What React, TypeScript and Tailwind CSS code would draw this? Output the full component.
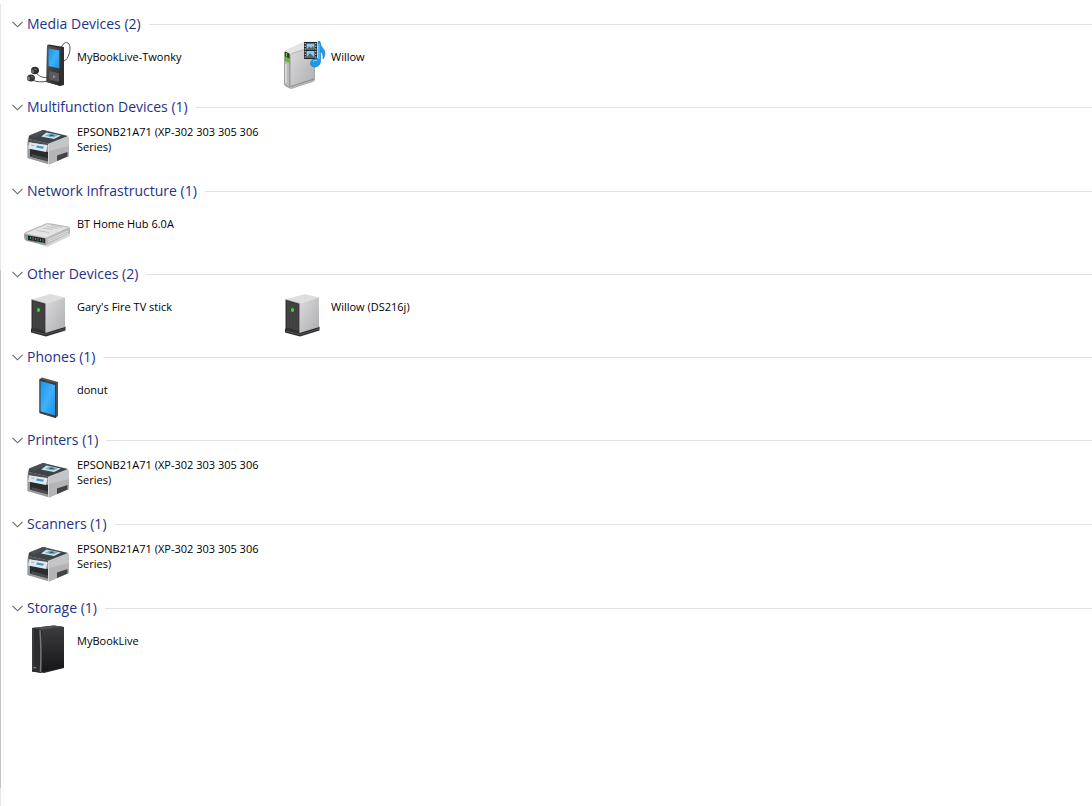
import { useState } from "react";
import type { ReactNode } from "react";
import clsx from "clsx";

type IconName = "player" | "mediaServer" | "printer" | "router" | "nas" | "phone" | "drive";

interface Device {
  name: string;
  icon: IconName;
}

interface DeviceGroup {
  title: string;
  devices: Device[];
  tall?: boolean;
}

const groups: DeviceGroup[] = [
  {
    title: "Media Devices",
    devices: [
      { name: "MyBookLive-Twonky", icon: "player" },
      { name: "Willow", icon: "mediaServer" },
    ],
  },
  {
    title: "Multifunction Devices",
    devices: [{ name: "EPSONB21A71 (XP-302 303 305 306 Series)", icon: "printer" }],
    tall: true,
  },
  {
    title: "Network Infrastructure",
    devices: [{ name: "BT Home Hub 6.0A", icon: "router" }],
  },
  {
    title: "Other Devices",
    devices: [
      { name: "Gary's Fire TV stick", icon: "nas" },
      { name: "Willow (DS216j)", icon: "nas" },
    ],
  },
  { title: "Phones", devices: [{ name: "donut", icon: "phone" }] },
  {
    title: "Printers",
    devices: [{ name: "EPSONB21A71 (XP-302 303 305 306 Series)", icon: "printer" }],
    tall: true,
  },
  {
    title: "Scanners",
    devices: [{ name: "EPSONB21A71 (XP-302 303 305 306 Series)", icon: "printer" }],
    tall: true,
  },
  { title: "Storage", devices: [{ name: "MyBookLive", icon: "drive" }] },
];

const Gradients = () => (
  <svg width="0" height="0" className="absolute" aria-hidden="true">
    <defs>
      <linearGradient id="blue" x1="0" y1="0" x2="1" y2="1">
        <stop offset="0" stopColor="#1a94e8" />
        <stop offset="0.5" stopColor="#3fb0fa" />
        <stop offset="1" stopColor="#1b93e6" />
      </linearGradient>
      <linearGradient id="silver" x1="0" y1="0" x2="1" y2="1">
        <stop offset="0" stopColor="#dcdcde" />
        <stop offset="1" stopColor="#adadb0" />
      </linearGradient>
      <linearGradient id="dark" x1="0" y1="0" x2="1" y2="1">
        <stop offset="0" stopColor="#5a5a5a" />
        <stop offset="1" stopColor="#262626" />
      </linearGradient>
      <linearGradient id="side" x1="0" y1="0" x2="0" y2="1">
        <stop offset="0" stopColor="#3c3c3e" />
        <stop offset="1" stopColor="#161618" />
      </linearGradient>
    </defs>
  </svg>
);

const icons: Record<IconName, ReactNode> = {
  player: (
    <>
      <path d="M37 8C39 2 44 1 45.500 5S45 19 40 21" fill="none" stroke="#555" strokeWidth="1" />
      <path d="M12 33C15 36 18 38 24 37.500M8 40C13 42 18 42.500 24 41" fill="none" stroke="#555" strokeWidth="1" />
      <path d="M23 5.500 25 4.500 40 7 40 45 36.500 46 22.500 42Z" fill="#303030" />
      <path d="M23 5.500 37 8.500 36.500 46 22.500 42Z" fill="url(#dark)" />
      <path d="M24.500 8.500 35.300 10.500V28.500L24.500 26Z" fill="url(#blue)" />
      <path d="M25.500 31.500 34.500 33.500V41.500L25.500 39Z" fill="#5b595f" stroke="#6b6b6b" strokeWidth=".5" />
      <path d="M29 34.500 32 37 29 38.500Z" fill="#8a8a8a" />
      <ellipse cx="11" cy="30.500" rx="4" ry="3.700" fill="#2e2e2e" />
      <ellipse cx="8.500" cy="31.500" rx="1.600" ry="2" fill="#6b6b6b" />
      <ellipse cx="7" cy="38" rx="4" ry="3.500" fill="#353535" />
      <ellipse cx="4.500" cy="38.500" rx="1.600" ry="2" fill="#7a7a7a" />
      <path d="M10 29l3 1M7 36.500l2.500 1" stroke="#8c8c8c" strokeWidth=".7" />
    </>
  ),
  mediaServer: (
    <>
      <path d="M7 11 24 3Q26 2 29 3L37 7V40L13 49 7 46Z" fill="#b0b0b0" />
      <path d="M6.500 12Q7 10.500 9 9.500L24 3Q26 2 29 3L36 6 13.500 14.500V48L6.500 45Z" fill="#e4e4e4" />
      <path d="M12.500 15.500Q13 14 15 13L36.500 6.500V39.500Q36.500 41 35 41.500L14.500 48Q12.500 48.500 12.500 47Z" fill="url(#silver)" stroke="#a2a2a4" strokeWidth=".7" />
      <path d="M6.500 12 11.500 14.500V47.500L6.500 45Z" fill="#b9b9bb" stroke="#8a8a8a" strokeWidth=".7" />
      <path d="M7 11.500 11.500 13.500V19L7 17Z" fill="#303830" />
      <path d="M7 16.500 11.500 18.500V23L7 21Z" fill="#63b62f" />
      <path d="M8.500 13v3.500" stroke="#7bd348" strokeWidth="1" />
      <path d="M8 24V43" stroke="#f4f4f4" strokeWidth="1" />
      <path d="M13 46.500 36 39" stroke="#8a8a8c" strokeWidth="1" />
      <path d="M26 2H39V19H26Z" fill="#222" />
      <path d="M28.500 3.500H36.500V9.500H28.500ZM28.500 11H36.500V17.500H28.500Z" fill="#91c8e8" />
      <path d="M28.500 9.500 31 6.500 33 8 35 6 36.500 9.500ZM28.500 17.500 32 13 36.500 17.500Z" fill="#496b78" />
      <path d="M27.200 3V19M37.800 3V19" stroke="#fff" strokeWidth="1" strokeDasharray="1.200 1.500" />
      <path d="M40 1.500H42Q42.500 6 45 8.500 49 13 45 19 45.500 13 42.500 11.500V21C42.500 26 38 28 34.500 26.500 30.500 24.500 32.500 18 40 18.500Z" fill="#199be9" stroke="#1477bd" strokeWidth=".6" />
      <path d="M41 4V19M35 21.500Q36.500 20 39 20.500" fill="none" stroke="#80d4ff" strokeWidth="1" />
    </>
  ),
  printer: (
    <>
      <path d="M3.500 17 5 12.500 19 7 43.500 13 45 16V33L25 41.500 3.500 35Z" fill="#c8c9cb" />
      <path d="M24 20 45 14V33L25 41.500Z" fill="#c5c5c7" />
      <path d="M25 28 45 23V33L25 41.500Z" fill="#b4b4b7" />
      <path d="M5 13 19 7 44 13 24.500 20.500 4.500 16Z" fill="#3e4447" />
      <path d="M5 12.500 19 7 25 8.500 10 14.500Z" fill="#4a5053" />
      <path d="M22.500 9.500 37 12.500 30 16 17 13.500Z" fill="#cce7ef" />
      <path d="M25.500 10.500 34 12.300 29.500 14.500 21 12.800Z" fill="#6cafc8" />
      <path d="M27 11.500 31 12.300 25 13.500" fill="#354c55" />
      <path d="M4.500 16 24.500 20.500V23L4 19Z" fill="#4c5053" />
      <path d="M3.500 19 24 23.500V41L3.500 35Z" fill="#98999c" />
      <path d="M6 25 24 29V38L6 33.500Z" fill="#292b2d" />
      <path d="M7.500 31 24 35.500V38.500L7.500 34Z" fill="#494b4d" />
      <path d="M5.500 19.500 23.500 22 22 29 4 25.500Z" fill="#dfe9ee" />
      <path d="M13 22.500 20 23.700 19 25.700 12 24.500Z" fill="#3d9aca" />
      <path d="M7 22 10.500 22.600" stroke="#aab4ba" strokeWidth="1" />
      <path d="M33 32.500 43.500 29V33.500L33 38Z" fill="#414345" />
      <path d="M24.500 21V41" stroke="#d6d6d8" strokeWidth="1" />
    </>
  ),
  router: (
    <>
      <path d="M1 31 23 40 46 29V25L20 34Z" fill="#d8d8d8" />
      <path d="M0 27Q0 25.500 3 24.500L22 16.500Q24 16 27 16.500L44 19.500Q46 20 46 22V26L23 37.500Q21 38.500 19 38L3 34Q0 33 0 31Z" fill="#aaa" />
      <path d="M1 26.500 23 17 45 20.500 22 31Z" fill="#e4e4e4" stroke="#c7c7c7" strokeWidth=".6" />
      <path d="M19 21 29 22.500M23 19.500 34 21.500M27 18.500 38 20.500M13 23.500 25 25.500" stroke="#c4c4c4" strokeWidth="1" />
      <path d="M22 31 45.500 21.500V26L22 37.500Z" fill="#bcbcbc" />
      <path d="M24 33 44 24M24 35 44 26" stroke="#eee" strokeWidth=".7" />
      <path d="M1 27.500 22 31.500V37.500L2 33.500Z" fill="#8f8f8f" />
      <path d="M4 28.500 21 31.500V36L4 33Z" fill="#242626" />
      <path d="M6 31h1M11 32h1M16 33h1" stroke="#49c888" strokeWidth="1.500" />
      <path d="M9 30v3.500M14 31v3.500M19 32v3.500" stroke="#899" strokeWidth=".6" />
    </>
  ),
  nas: (
    <>
      <path d="M7 38.500 22 42 41.500 36.500V40.500L22 46.500 7 42.500Z" fill="#2c2c2c" />
      <path d="M8 41 22 44.500 41 39" fill="none" stroke="#666" strokeWidth=".7" />
      <path d="M7.500 9.500 26.500 4 41 7.500 21.500 13.500Z" fill="#dededf" />
      <path d="M21.500 13.500 41 7.500V37L21.500 43Z" fill="url(#silver)" />
      <path d="M7.500 9.500 21.500 13.500V43L7.500 39Z" fill="#333" />
      <path d="M9 11.500 20.500 14.500V40.500L9 37.500Z" fill="#444" />
      <path d="M12 13V37.500M15 13.500V38M18 14.500V39" stroke="#3a3a3a" strokeWidth=".7" />
      <path d="M7.500 9.500 21.500 13.500V43" fill="none" stroke="#999" strokeWidth=".5" />
      <ellipse cx="14.500" cy="20" rx="1.500" ry="1.900" fill="#2de52d" />
    </>
  ),
  phone: (
    <>
      <path d="M15.500 6 18 4.500 34 9V43L31.500 45 15.500 40Z" fill="#555250" />
      <path d="M15.500 6 32 10.500V45L15.500 40Z" fill="#393938" />
      <path d="M16.500 8 31 12V42.500L16.500 38.500Z" fill="url(#blue)" />
      <path d="M22 8 26 9.200M22 41.500 26 42.500" stroke="#555" strokeWidth=".8" />
    </>
  ),
  drive: (
    <>
      <path d="M8 4 30 1.500 40 3V44L20 49 8 47.500Z" fill="#29292b" />
      <path d="M8 4 30 1.500 40 3 18 6Z" fill="#505052" />
      <path d="M8 4 17 5.500V49L8 47.500Z" fill="#2d2d2f" />
      <path d="M18 6 40 3V43.500L18 48Z" fill="url(#side)" />
      <path d="M16 6Q17.500 25 16.500 48" fill="none" stroke="#77777a" strokeWidth="1.500" />
      <path d="M9 5V46" stroke="#565658" strokeWidth=".7" />
      <path d="M9.500 43.500 12.500 44" stroke="#999" strokeWidth="1" />
    </>
  ),
};

const DeviceIcon = ({ name }: { name: IconName }) => (
  <svg viewBox="0 0 48 48" className="h-12 w-12 flex-none overflow-visible" aria-hidden="true">
    {icons[name]}
  </svg>
);

const DeviceSection = ({ group }: { group: DeviceGroup }) => {
  const [open, setOpen] = useState(true);

  return (
    <section>
      <div className="flex h-[22px] items-center gap-2">
        <button
          type="button"
          aria-expanded={open}
          onClick={() => setOpen(!open)}
          className="flex items-center gap-1 whitespace-nowrap text-[14px] leading-[22px] text-[#1e3287]"
        >
          <svg viewBox="0 0 11 7" className={clsx("h-[7px] w-[11px]", !open && "-rotate-90")} aria-hidden="true">
            <path d="M.5.8 5.500 5.800 10.500.8" fill="none" stroke="#666" strokeWidth="1.100" />
          </svg>
          {group.title} ({group.devices.length})
        </button>
        <div className="h-px flex-1 bg-[#e2e2e2]" />
      </div>
      {open && (
        <ul className={clsx("flex flex-wrap pt-[5px] pl-3", group.tall ? "pb-[9px]" : "pb-2")}>
          {group.devices.map((device) => (
            <li key={device.name} className="flex w-[254px] gap-[5px]">
              <DeviceIcon name={device.icon} />
              <div className="flex h-8 flex-1 items-center">
                <span className="text-[11px] leading-[15px] text-black">{device.name}</span>
              </div>
            </li>
          ))}
        </ul>
      )}
    </section>
  );
};

const App = () => (
  <div className="flex min-h-screen bg-white font-['Open_Sans','Noto_Sans',sans-serif]">
    <Gradients />
    <div className="mt-1 flex w-1 flex-none flex-col border-r border-[#f8f8f8]">
      <div className="h-[266px] w-px bg-[#e6e6e6]" />
      <div className="h-[518px] w-px bg-[#c4c4c4]" />
      <div className="w-px flex-1 bg-[#e6e6e6]" />
    </div>
    <main className="min-w-0 flex-1 pt-[13px] pl-2">
      {groups.map((group) => (
        <DeviceSection key={group.title} group={group} />
      ))}
    </main>
  </div>
);

export default App;
